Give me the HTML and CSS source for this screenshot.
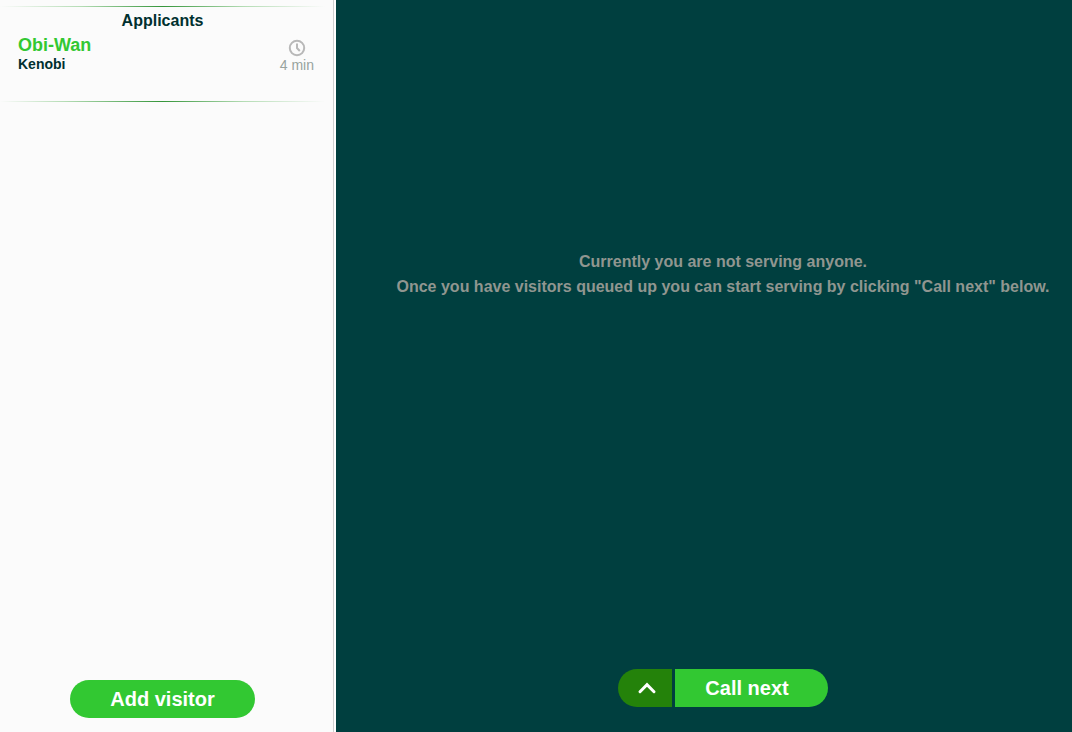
FILE: index.html
```
<!DOCTYPE html>
<html lang="en">
<head>
<meta charset="utf-8">
<meta name="viewport" content="width=device-width, initial-scale=1">
<title>Applicants</title>
<link rel="stylesheet" href="styles.css">
</head>
<body>
<div class="app">
  <aside class="sidebar">
    <section class="queue">
      <h1 class="queue-title">Applicants</h1>
      <ul class="visitors">
        <li class="visitor">
          <div class="name">
            <span class="first-name">Obi-Wan</span>
            <span class="last-name">Kenobi</span>
          </div>
          <div class="wait">
            <svg class="clock" viewBox="0 0 18 18" aria-hidden="true"><circle cx="9" cy="9" r="7.2"/><path d="M9 4.5V9l2.8 3"/></svg>
            <span>4 min</span>
          </div>
        </li>
      </ul>
    </section>
    <button class="button add" type="button">Add visitor</button>
  </aside>
  <main class="service">
    <div class="message">
      <p>Currently you are not serving anyone.</p>
      <p>Once you have visitors queued up you can start serving by clicking "Call next" below.</p>
    </div>
    <div class="actions">
      <button class="button more" type="button" aria-label="More options"><svg class="chevron" viewBox="0 0 20 14" aria-hidden="true"><path d="M3 10.7l7-7 7 7"/></svg></button>
      <button class="button call" type="button">Call next</button>
    </div>
  </main>
</div>
</body>
</html>
```
FILE: styles.css
```
* { box-sizing: border-box; }
body {
  margin: 0;
  font-family: "Liberation Sans", Arial, sans-serif;
  color: #00302f;
}
.app {
  display: grid;
  grid-template-columns: minmax(260px, 336px) 1fr;
  min-height: 100vh;
}
.sidebar {
  display: flex;
  flex-direction: column;
  justify-content: space-between;
  align-items: center;
  padding: 6px 0 14px;
  background: #fbfbfb;
  border-right: 2px solid #fff;
  box-shadow: inset -1px 0 #d0d0d0;
}
.queue {
  align-self: stretch;
  margin-right: 9px;
  padding: 6px 0 29px;
  background:
    linear-gradient(90deg, #fbfbfb, #b4dcb4 25%, #35953a 50%, #b4dcb4 75%, #fbfbfb) top / 100% 1px no-repeat,
    linear-gradient(90deg, #fbfbfb, #b4dcb4 20%, #35953a 50%, #b4dcb4 75%, #fbfbfb) bottom / 100% 1px no-repeat;
}
.queue-title {
  margin: 0;
  font-size: 16px;
  line-height: 18px;
  text-align: center;
}
.visitors { margin: 0; padding: 0; list-style: none; }
.visitor {
  display: flex;
  justify-content: space-between;
  align-items: flex-start;
  padding: 5px 11px 0 18px;
}
.name { display: flex; flex-direction: column; font-weight: bold; }
.first-name { color: #32c832; font-size: 18px; line-height: 20px; }
.last-name { font-size: 14px; line-height: 18px; }
.wait {
  display: flex;
  flex-direction: column;
  align-items: center;
  padding-top: 4px;
  color: #98a39e;
  font-size: 14px;
  line-height: 16px;
}
.clock { width: 18px; height: 18px; fill: none; stroke: #b8b8b8; stroke-width: 2; }
.button {
  height: 38px;
  border: 0;
  padding: 0;
  color: #fff;
  background: #32c832;
  font: bold 20px "Liberation Sans", Arial, sans-serif;
}
.add { width: 185px; border-radius: 19px; margin-right: 9px; }
.service {
  display: flex;
  flex-direction: column;
  justify-content: space-between;
  align-items: center;
  padding: 249px 20px 25px 58px;
  background: #003f3f;
}
.message {
  color: #909690;
  font-size: 16px;
  font-weight: bold;
  line-height: 25px;
  text-align: center;
}
.message p { margin: 0; }
.actions { display: flex; gap: 3px; }
.more {
  display: grid;
  place-items: center;
  width: 54px;
  padding-left: 4px;
  border-radius: 19px 0 0 19px;
  background: #24820a;
}
.call { width: 153px; padding-right: 9px; border-radius: 0 19px 19px 0; }
.chevron { width: 20px; height: 14px; fill: none; stroke: #fff; stroke-width: 3; stroke-linecap: round; }
```
